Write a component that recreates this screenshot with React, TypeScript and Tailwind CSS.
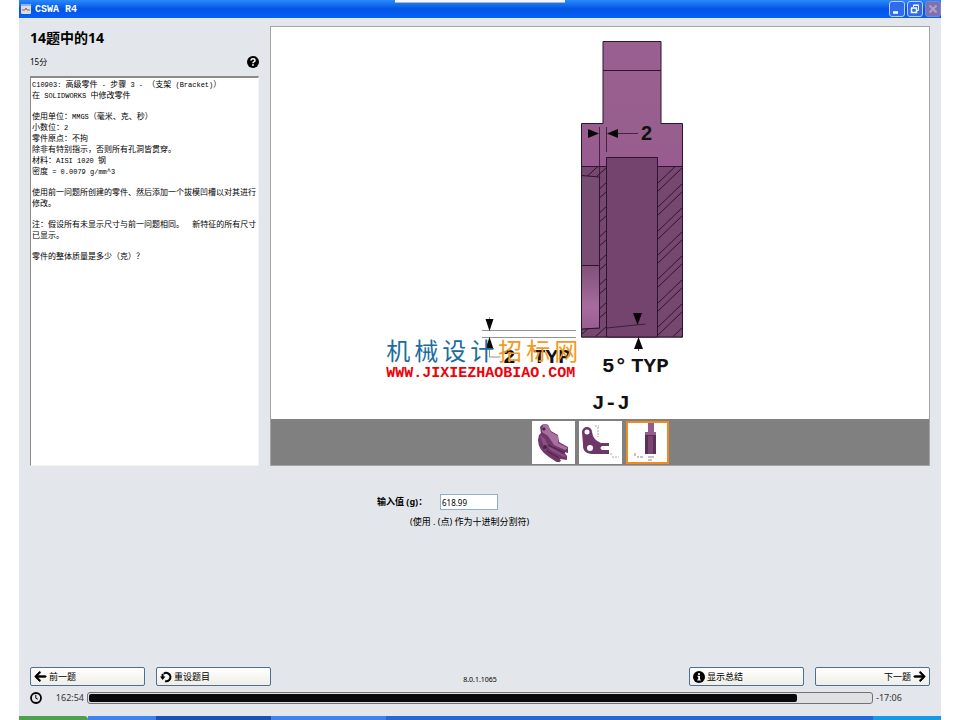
import { FaArrowLeft, FaArrowRight } from "react-icons/fa6";
import type { ReactNode } from "react";

const questionLines = [
    "C10903: 高级零件 - 步骤 3 - （支架 (Bracket)）",
    "在 SOLIDWORKS 中修改零件",
    "",
    "使用单位：MMGS（毫米、克、秒）",
    "小数位：2",
    "零件原点：不拘",
    "除非有特别指示，否则所有孔洞皆贯穿。",
    "材料：AISI 1020 钢",
    "密度 = 0.0079 g/mm^3",
    "",
    "使用前一问题所创建的零件、然后添加一个拔模凹槽以对其进行修改。",
    "",
    "注：假设所有未显示尺寸与前一问题相同。　 新特征的所有尺寸已显示。",
    "",
    "零件的整体质量是多少（克）？",
];

const hatchRows = [0, 1, 2, 3, 4, 5, 6, 7, 8];

const elapsed = 162 * 60 + 54;
const remaining = 17 * 60 + 6;

// latin runs use the narrow half-width font next to the chinese glyphs
function QuestionLine({ text }: { text: string }) {
    if (text === "") {
        return <div className="h-[10px]" />;
    }
    return (
        <p>
            {text.split(/([\x20-\x7e]+)/).map((part, i) =>
                i % 2 === 1
                    ? <span key={i} className="font-['Liberation_Mono','Noto_Sans_CJK_SC',monospace] text-[7px] leading-none">{part}</span>
                    : part
            )}
        </p>
    );
}

function HelpIcon() {
    return (
        <svg width="12" height="12" viewBox="0 0 12 12">
            <circle cx="6" cy="6" r="6" />
            <path d="M4 4.600q0-1.900 2-1.900t2 1.700q0 1-1.100 1.500-.9.400-.9 1.300" fill="none" stroke="#fff" strokeWidth="1.500" />
            <circle cx="6" cy="9" r="0.900" fill="#fff" />
        </svg>
    );
}

function InfoIcon() {
    return (
        <svg width="12" height="12" viewBox="0 0 12 12">
            <circle cx="6" cy="6" r="6" />
            <circle cx="6" cy="3" r="1.100" fill="#fff" />
            <path d="M4.500 4.800H7v3.700h.8v1.100H4.300V8.500h.9V5.900h-.7z" fill="#fff" />
        </svg>
    );
}

function ResetIcon() {
    return (
        <svg width="12" height="12" viewBox="0 0 12 12">
            <path d="M3.800 2.700A4.200 4.200 0 1 1 5 10.100" fill="none" stroke="#000" strokeWidth="2" />
            <path d="M2.600 2.800v4" stroke="#000" strokeWidth="2" />
            <path d="M0 5.500h5.400L2.700 9z" />
        </svg>
    );
}

function ClockIcon() {
    return (
        <svg width="12" height="12" viewBox="0 0 12 12" fill="none" stroke="#000">
            <circle cx="6" cy="6" r="5" strokeWidth="1.800" />
            <path d="M5.800 3v3.200l2 1" strokeWidth="1" />
        </svg>
    );
}

function TitleBar() {
    return (
        <header className="flex h-[18px] items-center justify-between bg-linear-to-b from-[#2a8afc] via-[#0553e4] to-[#0461f8] pl-[2px] text-white">
            <div className="flex items-center gap-1">
                <svg width="10" height="10" viewBox="0 0 10 10">
                    <rect width="10" height="10" rx="1" fill="#d8dde6" />
                    <rect width="10" height="2" fill="#8fb2ea" />
                    <path d="M1 6h3l1-2 1 2h3" fill="none" stroke="#c0504d" />
                </svg>
                <h1 className="font-['Liberation_Mono',monospace] text-[10px] font-bold">CSWA R4</h1>
            </div>
            <div className="flex gap-[2px]">
                <button aria-label="最小化" className="size-4 rounded-[3px] border border-[#b9d0fa] bg-[#2f6bec]">
                    <svg viewBox="0 0 14 14"><path d="M3 10.500h5" stroke="#fff" strokeWidth="2.500" /></svg>
                </button>
                <button aria-label="还原" className="size-4 rounded-[3px] border border-[#b9d0fa] bg-[#2f6bec]">
                    <svg viewBox="0 0 14 14" fill="none" stroke="#fff">
                        <path d="M5.500 5V3.500h5v5H9M5 3h6" />
                        <path d="M3.500 6v4.500h5V6M3 6h6" strokeWidth="1.500" />
                    </svg>
                </button>
                <button aria-label="关闭" disabled className="size-4 rounded-[3px] border border-[#7f86cc] bg-[#7a72b4]">
                    <svg viewBox="0 0 14 14"><path d="M3.500 3.500l7 7M10.500 3.500l-7 7" stroke="#b3a1c4" strokeWidth="2" /></svg>
                </button>
            </div>
        </header>
    );
}

function SectionDrawing() {
    return (
        <svg viewBox="271 27 658 392" className="block w-full">
            <defs>
                <linearGradient id="body" x1="0" y1="0" x2="0" y2="1">
                    <stop offset="0" stopColor="#9a5f91" />
                    <stop offset="0.3" stopColor="#975f8d" />
                    <stop offset="0.45" stopColor="#9a5a92" />
                    <stop offset="0.6" stopColor="#a268a0" />
                </linearGradient>
                <linearGradient id="pocket" x1="0" y1="0" x2="0" y2="1">
                    <stop offset="0" stopColor="#80507a" />
                    <stop offset="0.65" stopColor="#a76c9d" />
                    <stop offset="1" stopColor="#9a5c92" />
                </linearGradient>
                <clipPath id="rightWall"><rect x="657.5" y="166.500" width="25" height="170" /></clipPath>
                <clipPath id="leftWall">
                    <path d="M581.500 166.500h25v170h-25v-7.500l18-1.500V177l-18-1.500z" />
                </clipPath>
            </defs>
            <g stroke="#2c1530">
                <path d="M603 41.500h58V123.500h21.500V337H581.500V123.500H603z" fill="url(#body)" />
                <path d="M603 70.500h58" />
                <path d="M581.500 166.500h101V337h-101z" fill="#77486f" />
                <path d="M581.500 175.500l18 1.500v151l-18 1z" fill="#784c73" />
                <path d="M581.500 265.500h18V328l-18 1z" fill="url(#pocket)" />
                <path d="M606.500 157.500h51V337h-51z" fill="#74446e" />
                <g clipPath="url(#rightWall)">
                    {hatchRows.map((row) => (
                        <g key={row}>
                            <path d={`M657 ${184 + row * 24}l26 -25`} />
                            <path d={`M657 ${192 + row * 24}l26 -25`} />
                        </g>
                    ))}
                </g>
                <g clipPath="url(#leftWall)">
                    {hatchRows.map((row) => (
                        <g key={row}>
                            <path d={`M581 ${182 + row * 24}l26 -24`} />
                            <path d={`M581 ${191 + row * 24}l26 -24`} />
                        </g>
                    ))}
                </g>
                <path d="M599.500 127v50M606.500 127v25M610 133.500h28M606.500 328l39 -4M638.500 337v14" strokeWidth="0.800" />
            </g>
            <path d="M482 330.500h94M482 337.500h94M489.500 317v8M489.500 345v12h11" fill="none" stroke="#777" strokeWidth="0.800" />
            <g fill="#0a0508">
                <path d="M588 129v9l11-4.500zM618 129v9l-11-4.500z" />
                <path d="M485.500 319h8l-4 12zM485.500 349h8l-4-12zM633 313h9l-4.500 12zM634 349h9l-4.500-12z" />
            </g>
            <g fill="#111" fontWeight="bold" fontFamily="'Liberation Mono', monospace" fontSize="21">
                <text x="641" y="140" fontFamily="'Liberation Sans', sans-serif" fontSize="20">2</text>
                <text x="503" y="363">2</text>
                <text x="533" y="363">TYP</text>
                <text x="602" y="372">5°</text>
                <text x="631" y="372">TYP</text>
                <text x="592" y="409">J-J</text>
            </g>
        </svg>
    );
}

function Watermark() {
    return (
        <div className="absolute top-[70%] left-[17.5%] whitespace-nowrap">
            <p className="flex gap-1 font-['Noto_Sans_CJK_SC',sans-serif] text-[24px] leading-[32px] text-[#1a6d9c]">
                {[..."机械设计"].map((char) => <span key={char}>{char}</span>)}
                {[..."招标网"].map((char) => <span key={char} className="text-[#f39a1e]">{char}</span>)}
            </p>
            <p className="font-['Liberation_Mono',monospace] text-[15px] leading-[16px] font-bold text-[#f00008]">WWW.JIXIEZHAOBIAO.COM</p>
        </div>
    );
}

function Thumbnail({ label, active, children }: { label: string, active?: boolean, children: ReactNode }) {
    return (
        <button
            aria-label={label}
            className={active ? "size-[43px] border-2 border-[#f08c1e] bg-white" : "size-[43px] border-2 border-white bg-white"}
        >
            <svg viewBox="0 0 39 39">{children}</svg>
        </button>
    );
}

function Thumbnails() {
    return (
        <div className="flex h-[46px] items-center justify-center gap-1 bg-[#808080]">
            <Thumbnail label="等轴测视图">
                <path d="M6 4q3-5 8-2l3 6 7 4 1 7 9 5v6l-4-1 3 4v4l-7-1 1 2-3 2-9-6Q4 27 4 17l1-5 2-2z" fill="#6f3869" />
                <path d="M9 2q3-2 5 0l3 7 7 4v7l10 5-3 2-11-5-6-9-6-4z" fill="#a8709f" />
                <path d="M14 23l12 7 7 3-3 1-14-7zM6 12l5 4 3 7-3 5z" fill="#8d5085" />
                <path d="M14 22l13 6 4 2M13 28l12 7" fill="none" stroke="#4c1f46" />
                <circle cx="10" cy="6" r="1.500" fill="#4c1f46" />
                <circle cx="11" cy="24" r="2" fill="#4c1f46" />
            </Thumbnail>
            <Thumbnail label="前视图">
                <path d="M1 9a5 5 0 0 1 10 0q1 8 9 11h8v3h-7q-3 2 0 4h7v4H10Q1 30 2 21z" fill="#6e3767" />
                <circle cx="6" cy="9" r="2.500" fill="#fff" />
                <circle cx="9" cy="25" r="3" fill="#fff" />
                <path d="M14 3h4M17 4v10M30 30v3M31 34h2M34 34h4" fill="none" stroke="#aaa" strokeDasharray="2 1" />
            </Thumbnail>
            <Thumbnail label="剖面视图 J-J" active>
                <path d="M20 0h6v9h2v22H17V9h3z" fill="#945c8c" />
                <path d="M17 12h11v19H17z" fill="#5f2d5b" />
                <path d="M20 13h5v18h-5z" fill="#784770" />
                <path d="M7 30v3M9 34h2M12 34h3M20 34h6M20 37h4" fill="none" stroke="#888" />
            </Thumbnail>
        </div>
    );
}

function FooterButton({ children, alignRight }: { children: ReactNode, alignRight?: boolean }) {
    return (
        <button
            className={`flex h-[19px] w-[115px] items-center gap-[2px] rounded-[2px] border border-[#4f6f92] bg-linear-to-b from-white to-[#efeee8] px-[3px] text-[9px] ${alignRight ? "justify-end" : ""}`}
        >
            {children}
        </button>
    );
}

export default function App() {
    return (
        <div className="min-h-screen bg-white px-[19px] font-['Noto_Sans','Noto_Sans_CJK_SC',sans-serif] text-black">
            <div className="relative flex min-h-screen flex-col bg-[#e3e6ea]">
                <div className="absolute top-0 left-[376px] h-[3px] w-[170px] border-b border-[#a9b4c6] bg-[#f4f6fa]" />
                <TitleBar />

                <main className="flex grow flex-col px-[11px] pt-2">
                    <div className="flex gap-[11px]">
                        <section className="flex w-[229px] shrink-0 flex-col">
                            <h2 className="pt-[2px] text-[14px] leading-5 font-bold">14题中的14</h2>
                            <div className="flex h-7 items-center justify-between text-[8px]">
                                <span>15分</span>
                                <button aria-label="帮助"><HelpIcon /></button>
                            </div>
                            <div className="grow border border-t-2 border-[#f4f4f0] border-t-[#8b8b83] border-l-[#8b8b83] bg-white pl-px font-['Noto_Sans_CJK_SC',sans-serif] text-[8px] leading-[11px]">
                                {questionLines.map((line, i) => <QuestionLine key={i} text={line} />)}
                            </div>
                        </section>
                        <section className="relative grow border border-[#a5a5a5] bg-white">
                            <SectionDrawing />
                            <Watermark />
                            <Thumbnails />
                        </section>
                    </div>

                    <form className="mx-auto mt-7 w-[206px] text-[9px]" onSubmit={(e) => e.preventDefault()}>
                        <div className="flex items-center gap-[14px]">
                            <label htmlFor="mass" className="w-[49px] font-bold whitespace-nowrap">输入值 (g)：</label>
                            <input
                                id="mass"
                                defaultValue="618.99"
                                className="h-4 w-[58px] border border-[#8fb0cc] bg-white px-px text-[8px]"
                            />
                        </div>
                        <p className="mt-[5px] pl-[33px] leading-[14px] whitespace-nowrap">(使用 . (点) 作为十进制分割符)</p>
                    </form>

                    <footer className="mt-auto">
                        <div className="flex items-center justify-between">
                            <div className="flex gap-[11px]">
                                <FooterButton><FaArrowLeft size={13} stroke="currentColor" strokeWidth={30} />前一题</FooterButton>
                                <FooterButton><ResetIcon />重设题目</FooterButton>
                            </div>
                            <span className="pt-2 text-[7px]">8.0.1.1065</span>
                            <div className="flex gap-[11px]">
                                <FooterButton><InfoIcon />显示总结</FooterButton>
                                <FooterButton alignRight>下一题<FaArrowRight size={13} stroke="currentColor" strokeWidth={30} /></FooterButton>
                            </div>
                        </div>
                        <div className="flex h-6 items-center text-[9px] text-[#333]">
                            <ClockIcon />
                            <span className="w-[42px] text-right">162:54</span>
                            <div className="mx-[3px] h-3 grow rounded-[3px] border border-[#6f7174] bg-[#dfe0e2] p-px">
                                <div
                                    className="h-full rounded-[2px] bg-[#07080b]"
                                    style={{ width: `${(elapsed / (elapsed + remaining)) * 100}%` }}
                                />
                            </div>
                            <span className="w-[54px]">-17:06</span>
                        </div>
                    </footer>
                </main>

                <div className="mt-[6px] flex h-1">
                    <div className="w-[69px] rounded-tr-sm bg-[#4ea14c]" />
                    <div className="w-[68px] bg-[#3f83ee]" />
                    <div className="w-[115px] bg-[#1a50b8]" />
                    <div className="w-[115px] bg-[#3f83ee]" />
                    <div className="grow bg-[#2768d8]" />
                    <div className="w-[68px] bg-[#159be6]" />
                </div>
            </div>
        </div>
    );
}
